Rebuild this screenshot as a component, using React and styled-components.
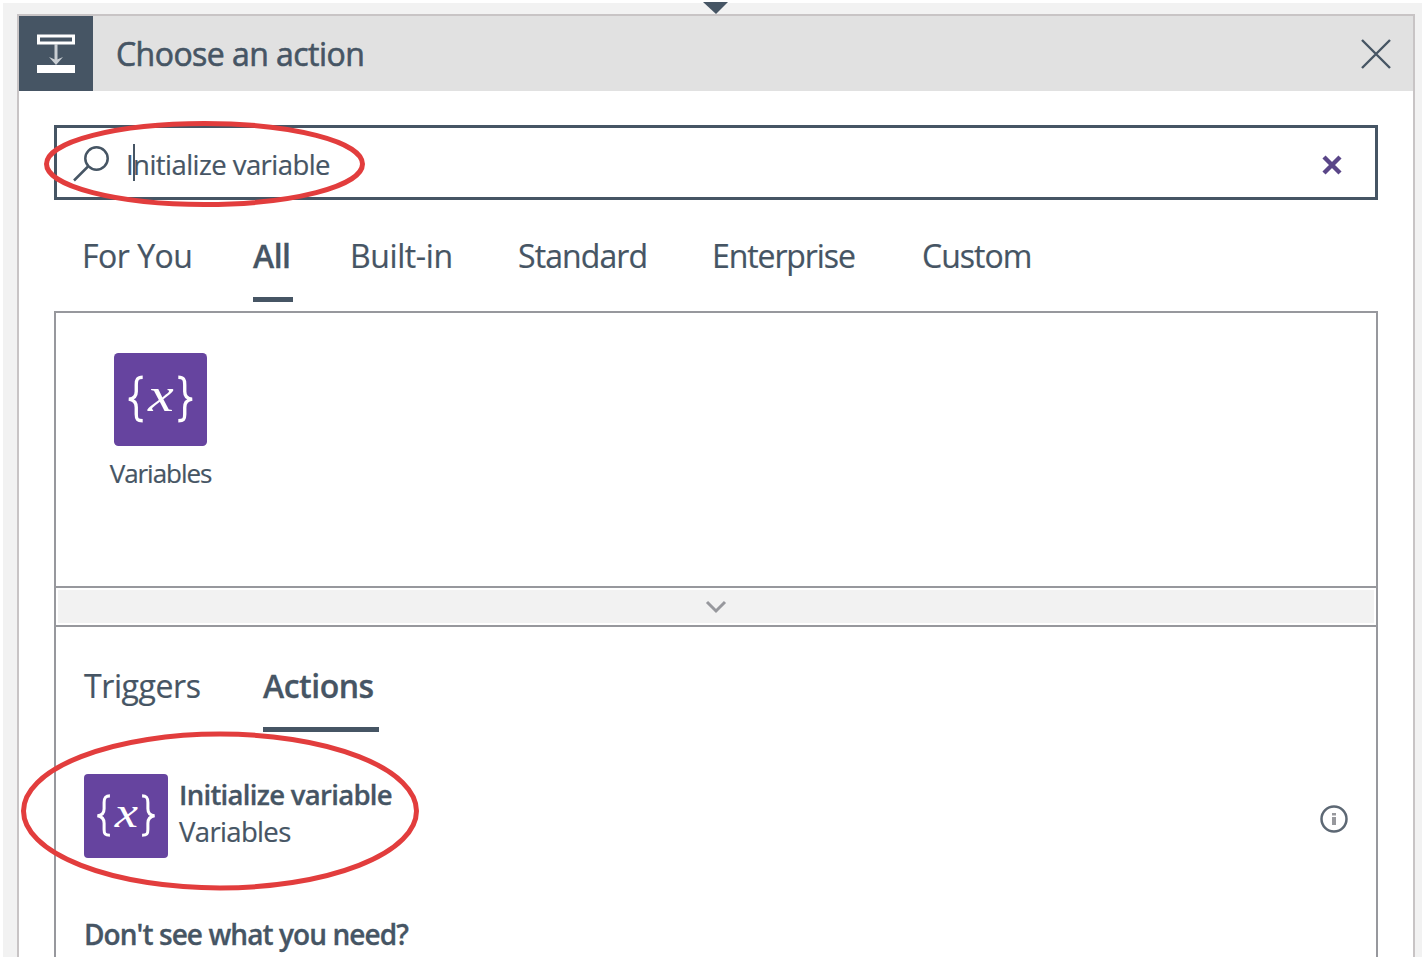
import React from "react";
import styled, { createGlobalStyle } from "styled-components";

const ink = "#465564";
const purple = "#66449f";
const line = "#97989d";

const GlobalStyle = createGlobalStyle`
  * { box-sizing: border-box; }
  body { margin: 0; background: #fff; overflow: hidden; }
`;

const Page = styled.div`
  position: relative;
  width: 1425px;
  height: 960px;
  padding: 3px;
  overflow: hidden;
  color: ${ink};
  font-family: "Open Sans", "Noto Sans", sans-serif;
`;

const Canvas = styled.div`
  height: 954px;
  padding: 11px 7px 0 14px;
  background: #f2f2f2;
`;

const Panel = styled.section`
  display: flex;
  flex-direction: column;
  height: 943px;
  border: 2px solid #c8c4c5;
  border-bottom: 0;
  background: #fff;
`;

const Header = styled.header`
  display: flex;
  align-items: center;
  height: 75px;
  flex: none;
  padding-right: 22px;
  background: #e1e1e1;
`;

const HeaderIcon = styled.div`
  width: 74px;
  height: 75px;
  background: ${ink};
`;

const Text = styled.span`
  display: block;
  white-space: nowrap;
  font-size: ${(p) => p.$size}px;
  line-height: ${(p) => p.$lh || 40}px;
  font-weight: ${(p) => (p.$strong ? 600 : 400)};
  letter-spacing: ${(p) => p.$track || 0}px;
  -webkit-text-stroke: ${(p) => (p.$strong ? 0.3 : 0.2)}px ${ink};
`;

const Title = styled.h1`
  flex: 1;
  margin: 0 0 0 23px;
  font-size: 32px;
  line-height: 40px;
  font-weight: 400;
  letter-spacing: -0.55px;
  -webkit-text-stroke: 0.6px ${ink};
`;

const IconButton = styled.button`
  display: flex;
  padding: 0;
  border: 0;
  background: none;
`;

const Body = styled.div`
  display: flex;
  flex-direction: column;
  flex: 1;
  min-height: 0;
  padding: 34px 35px 0;
`;

const SearchBox = styled.div`
  display: flex;
  align-items: center;
  height: 75px;
  flex: none;
  border: 3px solid ${ink};
  padding: 5px 33px 0 16px;
`;

const SearchText = styled.div`
  position: relative;
  flex: 1;
  margin-left: 15px;
`;

const Caret = styled.i`
  position: absolute;
  left: 7px;
  top: -1px;
  width: 2px;
  height: 37px;
  background: ${ink};
`;

const CategoryTabs = styled.nav`
  display: grid;
  grid-template-columns: 171px 97px 168px 194px 210px auto;
  height: 111px;
  flex: none;
  padding: 36px 0 0 28px;
`;

const ResultTabs = styled.nav`
  display: flex;
  gap: 62px;
  padding-left: 28px;
`;

const Tab = styled.div`
  width: ${(p) => (p.$width ? `${p.$width}px` : "auto")};
  height: ${(p) => p.$height}px;
  border-bottom: ${(p) => (p.$active ? `5px solid ${ink}` : "0")};
`;

const Results = styled.div`
  flex: 1;
  min-height: 0;
  border: 2px solid ${line};
  border-bottom: 0;
`;

const Connectors = styled.div`
  height: 273px;
  padding: 40px 0 0 47px;
`;

const Connector = styled.div`
  display: flex;
  flex-direction: column;
  align-items: center;
  width: 115px;
`;

const Expander = styled.div`
  display: flex;
  align-items: center;
  justify-content: center;
  height: 41px;
  margin-bottom: 39px;
  border: solid ${line};
  border-width: 2px 0;
  background: #f2f2f2;
  box-shadow: inset 0 0 0 2px #fff;
`;

const ActionRow = styled.div`
  display: flex;
  align-items: flex-start;
  margin-top: 42px;
  padding: 0 28px 0 28px;
`;

const ActionText = styled.div`
  flex: 1;
  margin: 2px 0 0 11px;
`;

const InfoIcon = styled.svg`
  margin-top: 31px;
`;

const Prompt = styled.div`
  margin: 56px 0 0 28px;
`;

const Overlay = styled.svg`
  position: absolute;
  inset: 0;
  pointer-events: none;
`;

const Block = styled.svg`
  display: block;
`;

const VariableIcon = ({ size }) => (
  <Block width={size} height={size} viewBox="0 0 94 94">
    <rect width="94" height="94" rx="4.500" fill={purple} />
    <g fill="none" stroke="#fff" strokeWidth="3.400">
      <path d="M29 24.500C23.500 24.500 22.500 27 22.500 32V39C22.500 44 20 46.500 15 46.700C20 47.500 22.500 50 22.500 55V62C22.500 67 23.500 68.500 29 68.500" />
      <path d="M65 24.500C70.500 24.500 71.500 27 71.500 32V39C71.500 44 74 46.500 79 46.700C74 47.500 71.500 50 71.500 55V62C71.500 67 70.500 68.500 65 68.500" />
    </g>
    <text x="34.500" y="59" fill="#fff" fontFamily="Liberation Serif" fontStyle="italic" fontSize="49" textLength="26" lengthAdjust="spacingAndGlyphs">x</text>
  </Block>
);

const InsertStepIcon = () => (
  <Block width="74" height="75" viewBox="0 0 74 75">
    <rect x="19.500" y="20" width="35" height="7" fill={ink} stroke="#fff" strokeWidth="3" />
    <path d="M37 28V44" stroke="#c9ced3" strokeWidth="3" />
    <path d="M30 41L37 49L44 41L37 44Z" fill="#c9ced3" />
    <rect x="18" y="49" width="38" height="8" fill="#fff" />
  </Block>
);

const categories = [
  { label: "For You", track: -0.5 },
  { label: "All", active: true, width: 40, track: -0.5 },
  { label: "Built-in", track: -0.4 },
  { label: "Standard", track: -0.9 },
  { label: "Enterprise", track: -1.1 },
  { label: "Custom", track: -1 },
];

export default function App() {
  return (
    <Page>
      <GlobalStyle />
      <Canvas>
        <Panel>
          <Header>
            <HeaderIcon><InsertStepIcon /></HeaderIcon>
            <Title>Choose an action</Title>
            <IconButton aria-label="Close">
              <svg width="30" height="30" viewBox="0 0 30 30">
                <path d="M1 1L29 29M29 1L1 29" stroke={ink} strokeWidth="2.400" />
              </svg>
            </IconButton>
          </Header>
          <Body>
            <SearchBox>
              <svg width="38" height="38" viewBox="0 0 38 38" fill="none" stroke={ink} strokeWidth="2.500">
                <circle cx="23.500" cy="12.500" r="11.200" />
                <path d="M15 20.500L1 34.500" />
              </svg>
              <SearchText>
                <Text $size={27.5} $track={-0.56}>Initialize variable</Text>
                <Caret />
              </SearchText>
              <IconButton aria-label="Clear search">
                <svg width="20" height="20" viewBox="0 0 20 20">
                  <path d="M2 2L18 18M18 2L2 18" stroke="#5a4688" strokeWidth="4.400" />
                </svg>
              </IconButton>
            </SearchBox>
            <CategoryTabs>
              {categories.map((c) => (
                <Tab key={c.label} $active={c.active} $width={c.width} $height={66}>
                  <Text $size={32} $strong={c.active} $track={c.track}>{c.label}</Text>
                </Tab>
              ))}
            </CategoryTabs>
            <Results>
              <Connectors>
                <Connector>
                  <VariableIcon size={93} />
                  <Text $size={26} $lh={55} $track={-1.05}>Variables</Text>
                </Connector>
              </Connectors>
              <Expander>
                <svg width="22" height="14" viewBox="0 0 22 14" fill="none" stroke={line} strokeWidth="3">
                  <path d="M2 2L11 11L20 2" />
                </svg>
              </Expander>
              <ResultTabs>
                <Tab $height={66} $width={117}><Text $size={32} $track={-0.4}>Triggers</Text></Tab>
                <Tab $height={66} $width={116} $active><Text $size={32} $strong $track={-0.5}>Actions</Text></Tab>
              </ResultTabs>
              <ActionRow>
                <VariableIcon size={84} />
                <ActionText>
                  <Text $size={27.5} $lh={37} $track={-0.7} $strong>Initialize variable</Text>
                  <Text $size={27.5} $lh={37} $track={-0.65}>Variables</Text>
                </ActionText>
                <InfoIcon width="28" height="28" viewBox="0 0 28 28" fill="none">
                  <circle cx="14" cy="14" r="12.500" stroke="#5d6874" strokeWidth="2.500" />
                  <path d="M14 8V10.500M14 12V20" stroke={line} strokeWidth="4" />
                </InfoIcon>
              </ActionRow>
              <Prompt><Text $size={28} $strong $track={-0.93}>Don't see what you need?</Text></Prompt>
            </Results>
          </Body>
        </Panel>
      </Canvas>
      <Overlay width="1425" height="960" viewBox="0 0 1425 960" fill="none">
        <path d="M703 2H728L716 14Z" fill={ink} />
        <ellipse cx="204.500" cy="164" rx="158" ry="40.500" stroke="#e23d3d" strokeWidth="5" />
        <ellipse cx="220" cy="811" rx="196.500" ry="77" stroke="#e23d3d" strokeWidth="5" />
      </Overlay>
    </Page>
  );
}
